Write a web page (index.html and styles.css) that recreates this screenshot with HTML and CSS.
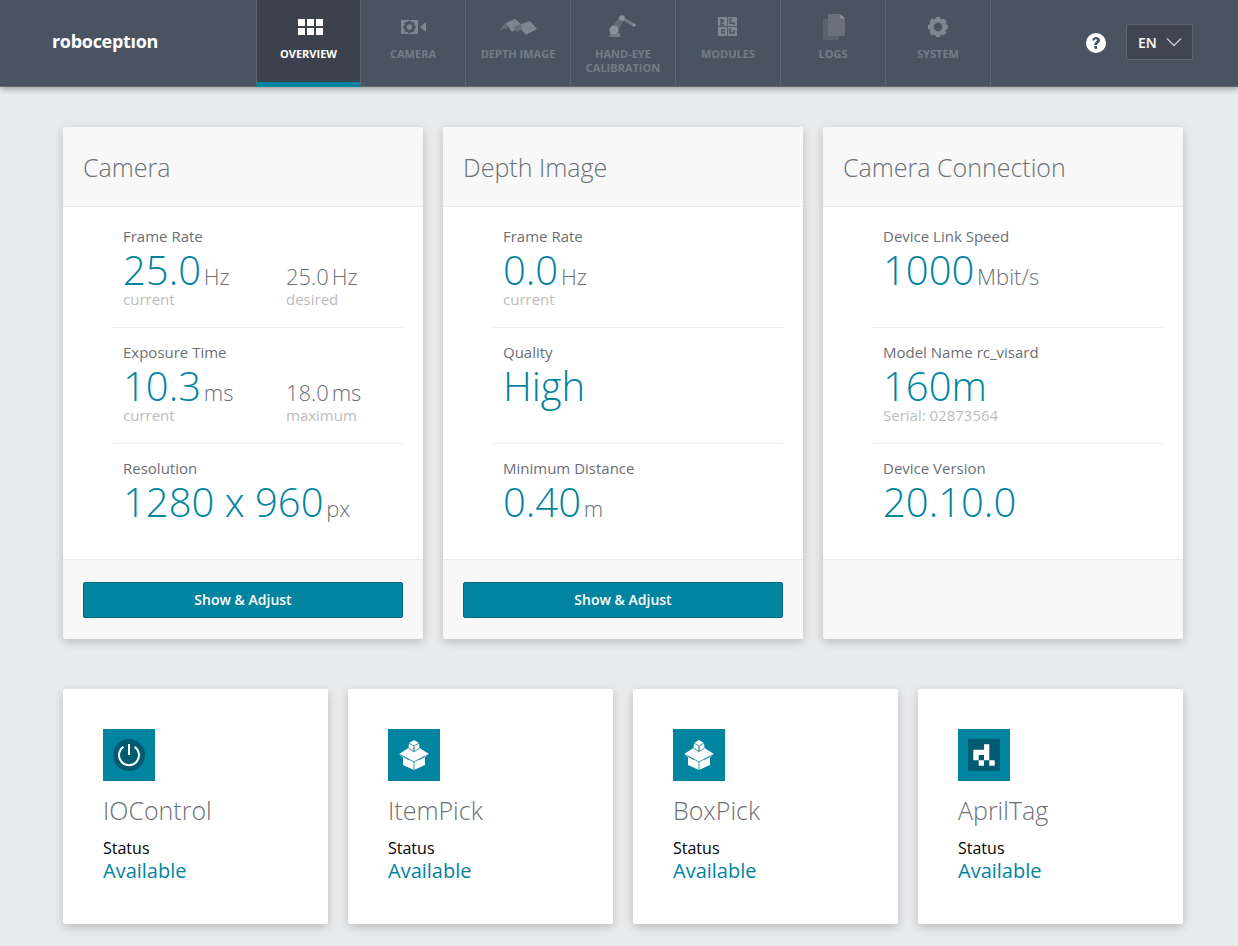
FILE: index.html
```html
<!DOCTYPE html>
<html lang="en">
<head>
<meta charset="utf-8">
<title>roboception</title>
<link rel="stylesheet" href="styles.css">
</head>
<body>
<svg class="defs" width="0" height="0" aria-hidden="true">
  <defs>
    <g id="gear">
      <circle cx="0" cy="0" r="6.6" fill="none" stroke="currentColor" stroke-width="4.4"/>
      <g fill="currentColor">
        <rect x="-2.2" y="-10" width="4.4" height="4"/>
        <rect x="-2.2" y="-10" width="4.4" height="4" transform="rotate(45)"/>
        <rect x="-2.2" y="-10" width="4.4" height="4" transform="rotate(90)"/>
        <rect x="-2.2" y="-10" width="4.4" height="4" transform="rotate(135)"/>
        <rect x="-2.2" y="-10" width="4.4" height="4" transform="rotate(180)"/>
        <rect x="-2.2" y="-10" width="4.4" height="4" transform="rotate(225)"/>
        <rect x="-2.2" y="-10" width="4.4" height="4" transform="rotate(270)"/>
        <rect x="-2.2" y="-10" width="4.4" height="4" transform="rotate(315)"/>
      </g>
    </g>
    <g id="box">
      <path fill="#fff" d="M21 14l5-3 5 3 .5 5L41 25l-4 3.500V36l-11 5-11-5v-7.500L11 25l9.500-6z"/>
      <path fill="#8a9aa3" d="M25 17.500h2V22h-2z"/>
      <path fill="none" stroke="#00849f" stroke-width=".8" d="M21 14l5 3 5-3M20.500 19l5.500 4 5.500-4M15 27l11 6 11-6M26 33v8M11 25l10 6M41 25l-10 6"/>
    </g>
  </defs>
</svg>

<header class="topbar">
  <div class="logo">roboceptıon</div>
  <nav class="nav">
    <a class="nav-item active">
      <svg class="nav-icon" viewBox="0 0 40 28"><g fill="#fff"><rect x="9" y="6" width="7" height="7"/><rect x="18" y="6" width="7" height="7"/><rect x="27" y="6" width="7" height="7"/><rect x="9" y="15" width="7" height="7"/><rect x="18" y="15" width="7" height="7"/><rect x="27" y="15" width="7" height="7"/></g></svg>
      <span>OVERVIEW</span>
    </a>
    <a class="nav-item">
      <svg class="nav-icon" viewBox="0 0 40 28"><rect x="8" y="7" width="17" height="14" fill="#7f8692"/><path d="M27 14l6-5v10z" fill="#7f8692"/><use href="#gear" transform="translate(16.500 14) scale(.62)" color="#4a5461"/></svg>
      <span>CAMERA</span>
    </a>
    <a class="nav-item">
      <svg class="nav-icon" viewBox="0 0 40 28"><path d="M1.500 17 8 10l9-4 6 5 9-3 7 8-11 6-7-8-7 5-4-6z" fill="#7f8692"/><path d="M1.500 17 8 10l2 5zM15 14l8-3 1 5-5 3z" fill="#656d79"/></svg>
      <span>DEPTH IMAGE</span>
    </a>
    <a class="nav-item">
      <svg class="nav-icon" viewBox="0 0 40 28"><path d="M6 24l1.500-4h9l1.500 4z" fill="#737a86"/><path d="M11 17l8-12" stroke="#656d79" stroke-width="6"/><path d="M19 5l12 7" stroke="#737a86" stroke-width="3"/><circle cx="11" cy="17" r="4.600" fill="#8a919c"/><circle cx="19" cy="5" r="2.800" fill="#8a919c"/><circle cx="31" cy="12" r="1.800" fill="#8a919c"/></svg>
      <span>HAND-EYE<br>CALIBRATION</span>
    </a>
    <a class="nav-item">
      <svg class="nav-icon" viewBox="0 0 40 28"><rect x="10" y="4" width="19" height="19" fill="#7f8692"/><path d="M19.500 4v19M10 13.500h19" stroke="#4a5461" stroke-width=".8"/><path d="M12 7h3v2h-2v3h3M24 6h-2v4h4v2M17 17h-3v3h3M22 15v5h4v-3" fill="none" stroke="#4a5461" stroke-width="1.500"/></svg>
      <span>MODULES</span>
    </a>
    <a class="nav-item">
      <svg class="nav-icon" viewBox="0 0 40 28"><rect x="10" y="6" width="16" height="21" fill="#5b636f"/><path d="M15 1h12l5 5v17H15z" fill="#6a717d"/><path d="M27.500 1l4.500 4.500h-4.500z" fill="#8f959f"/></svg>
      <span>LOGS</span>
    </a>
    <a class="nav-item">
      <svg class="nav-icon" viewBox="0 0 40 28"><use href="#gear" transform="translate(20 14)" color="#7f8692"/></svg>
      <span>SYSTEM</span>
    </a>
  </nav>
  <div class="top-right">
    <svg class="help" viewBox="0 0 20 20"><circle cx="10" cy="10" r="10" fill="#fff"/><path d="M6.200 7.600C6.300 5.300 8 4 10.100 4c2.200 0 3.900 1.300 3.900 3.200 0 1.500-.9 2.300-1.800 3-.8.600-1.100 1-1.100 1.900H8.300c0-1.600.4-2.400 1.400-3.200.8-.6 1.200-1 1.200-1.600 0-.6-.4-1-1-1-.7 0-1.200.500-1.300 1.300z" fill="#4a5461"/><rect x="8.300" y="13" width="2.800" height="2.800" fill="#4a5461"/></svg>
    <button class="lang">EN<svg class="chev" viewBox="0 0 16 10"><path d="M1 1.500l7 7 7-7" fill="none" stroke="#c5c9ce" stroke-width="1.300"/></svg></button>
  </div>
</header>

<main class="page">
  <section class="cards">
    <article class="card">
      <h2 class="card-head">Camera</h2>
      <div class="card-body">
        <div class="stat">
          <div class="label">Frame Rate</div>
          <div class="pair">
            <div><div class="value"><b>25.0</b> <i>Hz</i></div><div class="sub">current</div></div>
            <div><div class="value minor"><b>25.0</b> <i>Hz</i></div><div class="sub">desired</div></div>
          </div>
        </div>
        <div class="stat">
          <div class="label">Exposure Time</div>
          <div class="pair">
            <div><div class="value"><b>10.3</b> <i>ms</i></div><div class="sub">current</div></div>
            <div><div class="value minor"><b>18.0</b> <i>ms</i></div><div class="sub">maximum</div></div>
          </div>
        </div>
        <div class="stat">
          <div class="label">Resolution</div>
          <div class="value"><b>1280 x 960</b> <i>px</i></div>
        </div>
      </div>
      <div class="card-foot"><button class="btn">Show &amp; Adjust</button></div>
    </article>

    <article class="card">
      <h2 class="card-head">Depth Image</h2>
      <div class="card-body">
        <div class="stat">
          <div class="label">Frame Rate</div>
          <div class="value"><b>0.0</b> <i>Hz</i></div>
          <div class="sub">current</div>
        </div>
        <div class="stat">
          <div class="label">Quality</div>
          <div class="value"><b>High</b></div>
        </div>
        <div class="stat">
          <div class="label">Minimum Distance</div>
          <div class="value"><b>0.40</b> <i>m</i></div>
        </div>
      </div>
      <div class="card-foot"><button class="btn">Show &amp; Adjust</button></div>
    </article>

    <article class="card">
      <h2 class="card-head">Camera Connection</h2>
      <div class="card-body">
        <div class="stat">
          <div class="label">Device Link Speed</div>
          <div class="value"><b>1000</b> <i>Mbit/s</i></div>
        </div>
        <div class="stat">
          <div class="label">Model Name rc_visard</div>
          <div class="value"><b>160m</b></div>
          <div class="sub">Serial: 02873564</div>
        </div>
        <div class="stat">
          <div class="label">Device Version</div>
          <div class="value"><b>20.10.0</b></div>
        </div>
      </div>
      <div class="card-foot"></div>
    </article>
  </section>

  <section class="modules">
    <article class="module">
      <svg class="mod-icon" viewBox="0 0 52 52"><rect width="52" height="52" fill="#00849f"/><circle cx="26" cy="26" r="16" fill="#005a70"/><path d="M20.500 17.800a10 10 0 1 0 11 0" fill="none" stroke="#fff" stroke-width="2"/><path d="M26 15v11" stroke="#fff" stroke-width="2"/></svg>
      <h3 class="mod-title">IOControl</h3>
      <div class="mod-label">Status</div>
      <div class="mod-status">Available</div>
    </article>
    <article class="module">
      <svg class="mod-icon" viewBox="0 0 52 52"><rect width="52" height="52" fill="#00849f"/><use href="#box"/></svg>
      <h3 class="mod-title">ItemPick</h3>
      <div class="mod-label">Status</div>
      <div class="mod-status">Available</div>
    </article>
    <article class="module">
      <svg class="mod-icon" viewBox="0 0 52 52"><rect width="52" height="52" fill="#00849f"/><use href="#box"/></svg>
      <h3 class="mod-title">BoxPick</h3>
      <div class="mod-label">Status</div>
      <div class="mod-status">Available</div>
    </article>
    <article class="module">
      <svg class="mod-icon" viewBox="0 0 52 52"><rect width="52" height="52" fill="#00849f"/><rect x="10" y="10" width="32" height="32" fill="#005a70"/><path d="M26 15.300h5.300v16H26zM15.300 20.700H26V26H20.700v5.300H15.300zM20.700 31.300H26v5.400H20.700zM31.300 31.300h5.400v5.400h-5.400z" fill="#fff"/></svg>
      <h3 class="mod-title">AprilTag</h3>
      <div class="mod-label">Status</div>
      <div class="mod-status">Available</div>
    </article>
  </section>
</main>
</body>
</html>
```
FILE: styles.css
```css
* { box-sizing: border-box; }
html, body { margin: 0; height: 946px; overflow: hidden; }
body {
  background: #e9eaec;
  font-family: "Open Sans", sans-serif;
  color: #6b6f76;
}
.defs { position: absolute; }

.topbar {
  display: flex;
  height: 87px;
  background: #4a5461;
  border-bottom: 1px solid #656c76;
  box-shadow: 0 2px 6px rgba(0, 0, 0, .35);
}
.logo {
  width: 256px;
  padding: 29px 0 0 52px;
  font-size: 18px;
  line-height: 24px;
  font-weight: 700;
  letter-spacing: -.3px;
  color: #fff;
}
.nav { display: flex; }
.nav-item {
  display: flex;
  flex-direction: column;
  align-items: center;
  width: 105px;
  height: 87px;
  padding-top: 13px;
  border-left: 1px solid #5c6570;
  color: #757c87;
  font-size: 11px;
  font-weight: 700;
  line-height: 14px;
  text-align: center;
}
.nav-item:first-child { width: 104px; }
.nav-item:last-child { width: 106px; border-right: 1px solid #5c6570; }
.nav-item.active {
  background: #3b424d;
  border-bottom: 5px solid #00849f;
  color: #fff;
}
.nav-icon { width: 40px; height: 28px; margin-bottom: 6px; flex: none; }
.top-right {
  display: flex;
  align-items: center;
  margin-left: auto;
  padding: 0 45px 0 0;
  gap: 20px;
}
.help { width: 20px; height: 20px; }
.lang {
  display: flex;
  align-items: center;
  gap: 9px;
  width: 67px;
  height: 36px;
  margin-bottom: 2px;
  padding: 0 0 0 11px;
  background: #3f4652;
  border: 1px solid #5c6570;
  border-radius: 2px;
  color: #fff;
  font: 600 14px "Open Sans", sans-serif;
}
.chev { width: 16px; height: 10px; }

.page { padding: 40px 55px 0 63px; }
.cards { display: grid; grid-template-columns: repeat(3, 360px); gap: 20px; }
.card {
  display: flex;
  flex-direction: column;
  height: 512px;
  background: #fff;
  border-radius: 2px;
  box-shadow: 0 3px 10px rgba(0, 0, 0, .2);
}
.card-head {
  flex: none;
  height: 80px;
  margin: 0;
  padding: 0 20px;
  background: #f8f8f8;
  border-bottom: 1px solid #e9eaec;
  border-radius: 2px 2px 0 0;
  font-size: 25px;
  font-weight: 300;
  line-height: 80px;
  color: #6b6f76;
}
.card-body { flex: 1; min-height: 0; padding: 5px 20px 0 50px; }
.stat {
  height: 116px;
  padding: 14px 0 0 10px;
  border-bottom: 1px solid #e9eaec;
}
.stat:last-child { border-bottom: 0; }
.label { margin-bottom: 1px; font-size: 15px; line-height: 20px; color: #6b6f76; }
.pair { display: grid; grid-template-columns: 163px 1fr; }
.value {
  height: 42px;
  font-size: 22px;
  line-height: 46px;
  font-weight: 300;
  color: #6b6f76;
  white-space: nowrap;
}
.value::before { content: "\200b"; font-size: 40px; }
.value b { font-size: 40px; font-weight: 300; color: #00849f; }
.value i { font-style: normal; margin-left: -3px; }
.value.minor b { font-size: 22px; color: #6b6f76; }
.sub { font-size: 15px; line-height: 20px; color: #bcbcbc; }
.card-foot {
  flex: none;
  height: 80px;
  padding: 22px 20px 21px;
  background: #f8f8f8;
  border-top: 1px solid #e9eaec;
  border-radius: 0 0 2px 2px;
}
.btn {
  display: block;
  width: 100%;
  height: 36px;
  padding: 0 0 2px;
  background: #00849f;
  border: 1px solid #006a80;
  border-radius: 2px;
  color: #fff;
  font: 600 14px "Open Sans", sans-serif;
}

.modules { display: grid; grid-template-columns: repeat(4, 265px); gap: 20px; margin-top: 50px; }
.module {
  height: 235px;
  padding: 40px;
  background: #fff;
  border-radius: 2px;
  box-shadow: 0 3px 10px rgba(0, 0, 0, .2);
}
.mod-icon { display: block; width: 52px; height: 52px; }
.mod-title {
  margin: 14px 0 0;
  font-size: 25px;
  font-weight: 300;
  line-height: 30px;
  color: #6b6f76;
}
.mod-label { margin-top: 12px; font-size: 16px; line-height: 22px; color: #000; }
.mod-status { font-size: 20px; line-height: 24px; color: #00849f; }
```
